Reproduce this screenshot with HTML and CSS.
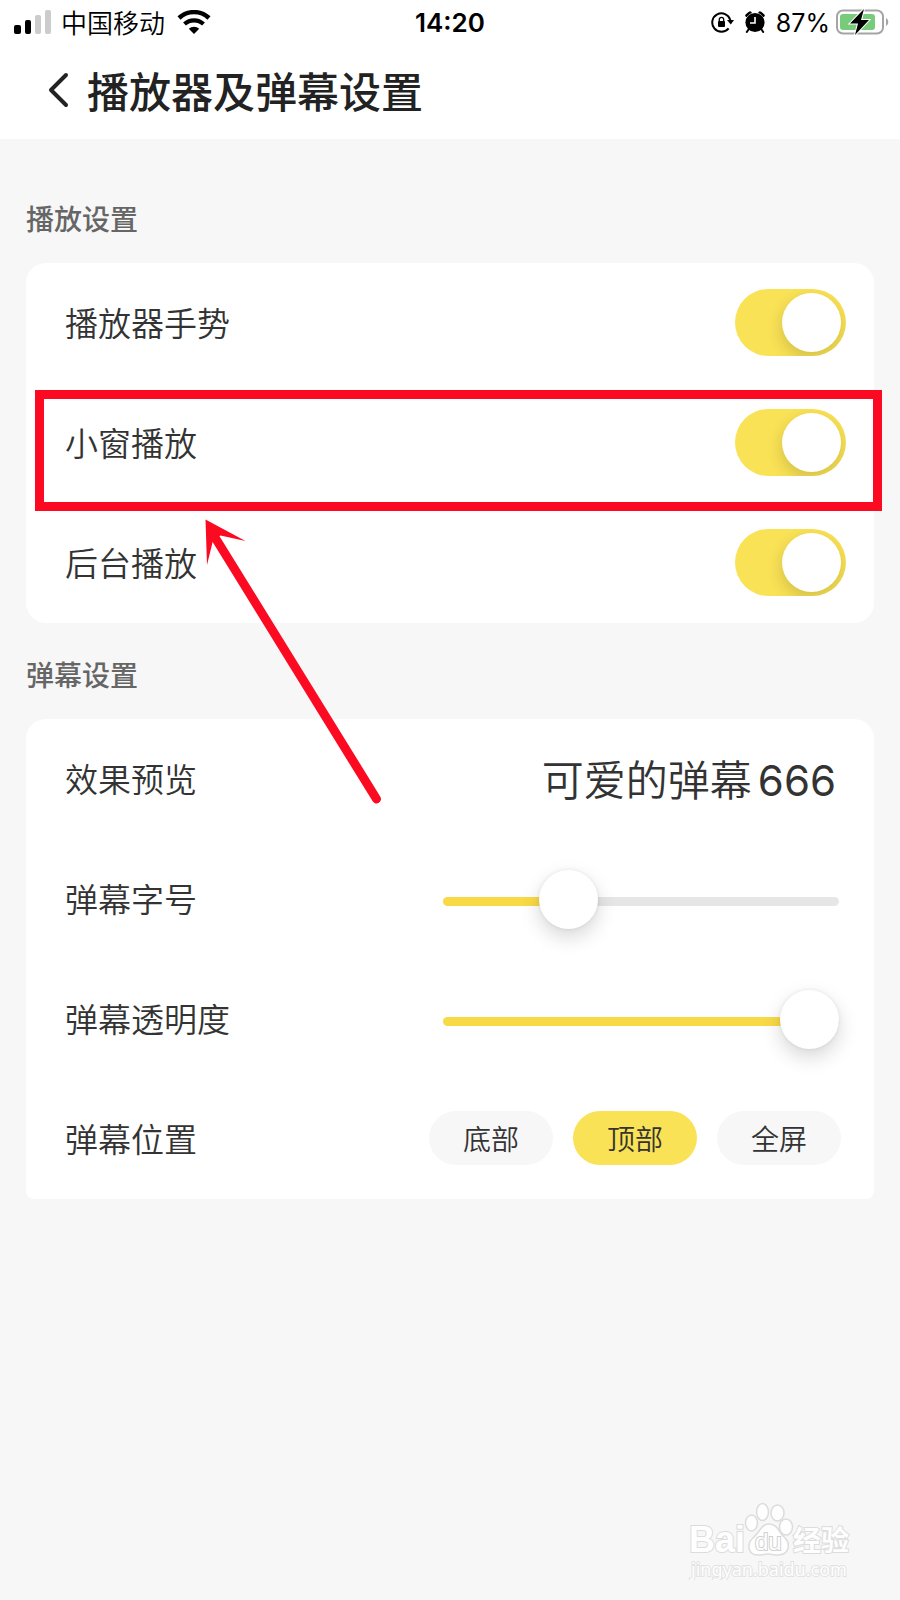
FILE: index.html
```html
<!DOCTYPE html>
<html lang="zh-CN">
<head>
  <meta charset="UTF-8" />
  <meta name="viewport" content="width=device-width, initial-scale=1.0"/>
  <title>播放器及弹幕设置</title>
  <link rel="stylesheet" href="styles.css">
</head>
<body>
  <div class="page">
    <!-- STATUS BAR -->
    <div class="status-bar">
      <div class="status-left">
        <svg class="signal" width="38" height="24" viewBox="0 0 38 24" aria-hidden="true">
          <rect x="0" y="15" width="7" height="9" rx="2" fill="#000"/>
          <rect x="11" y="10" width="6" height="14" rx="2" fill="#000"/>
          <rect x="21" y="5" width="6" height="19" rx="2" fill="#ccc"/>
          <rect x="31" y="0" width="6" height="24" rx="2" fill="#ccc"/>
        </svg>
        <span class="carrier">中国移动</span>
        <svg class="wifi" width="34" height="24" viewBox="0 0 34 24" aria-hidden="true">
          <path d="M2 8 A22 22 0 0 1 32 8" fill="none" stroke="#000" stroke-width="4.500"/>
          <path d="M7.500 14 A14 14 0 0 1 26.500 14" fill="none" stroke="#000" stroke-width="4.200"/>
          <path d="M17 24 L11.800 18.800 A7.500 7.500 0 0 1 22.200 18.800 Z" fill="#000"/>
        </svg>
      </div>
      <span class="time">14:20</span>
      <div class="status-right">
        <svg class="lock" width="23" height="22" viewBox="0 0 23 22" aria-hidden="true">
          <path d="M17.600 17.300 A9.200 9.200 0 1 1 19.300 9" fill="none" stroke="#000" stroke-width="2"/>
          <path d="M16 9 L23 9 L19.800 13.500 Z" fill="#000"/>
          <rect x="7" y="10" width="7" height="6" rx="1" fill="#000"/>
          <path d="M8.300 10.500 V8.500 a2.200 2.200 0 0 1 4.400 0 V10.500" fill="none" stroke="#000" stroke-width="1.300"/>
        </svg>
        <svg class="alarm" width="20" height="22" viewBox="0 0 20 22" aria-hidden="true">
          <path d="M2 4.500 L5 2 M18 4.500 L15 2" stroke="#000" stroke-width="3.500" stroke-linecap="round"/>
          <circle cx="10" cy="11.500" r="9.600" fill="#000" stroke="#fff" stroke-width="1" paint-order="stroke"/>
          <path d="M3.500 18.500 L1.800 21 M16.500 18.500 L18.200 21" stroke="#000" stroke-width="2" stroke-linecap="round"/>
          <path d="M10 6 V12 H5" fill="none" stroke="#fff" stroke-width="1.600"/>
        </svg>
        <span class="percent">87%</span>
        <svg class="battery" width="53" height="26" viewBox="0 0 53 26" aria-hidden="true">
          <rect x="1" y="1.500" width="46" height="23" rx="6" fill="#fff" stroke="#a5a5a8" stroke-width="2"/>
          <rect x="4" y="5" width="35" height="16" rx="3" fill="#78cb7b"/>
          <path d="M50 9 c3 1.500 3 6.500 0 8 z" fill="#a5a5a8"/>
          <path d="M28 0 L14 14.500 H22 L19 26 L33 11 H25 Z" fill="#000" stroke="#fff" stroke-width="2" paint-order="stroke"/>
        </svg>
      </div>
    </div>

    <!-- HEADER -->
    <header class="header">
      <button class="back" type="button" aria-label="返回">
        <svg width="22" height="36" viewBox="0 0 22 36" aria-hidden="true">
          <path d="M18 3 L3 18 L18 33" fill="none" stroke="#222" stroke-width="4" stroke-linecap="round" stroke-linejoin="round"/>
        </svg>
      </button>
      <h1 class="title">播放器及弹幕设置</h1>
    </header>

    <main class="content">
      <h2 class="section-title">播放设置</h2>
      <section class="card">
        <div class="row row-switch">
          <label for="gesture">播放器手势</label>
          <input class="switch" type="checkbox" id="gesture" checked />
        </div>
        <div class="row row-switch">
          <label for="window">小窗播放</label>
          <input class="switch" type="checkbox" id="window" checked />
          <span class="highlight"></span>
        </div>
        <div class="row row-switch">
          <label for="background">后台播放</label>
          <input class="switch" type="checkbox" id="background" checked />
          <svg class="arrow" width="190" height="290" viewBox="0 0 190 290" aria-hidden="true">
            <path d="M16 24 L176.500 284" stroke="#fb0a21" stroke-width="9" stroke-linecap="round"/>
            <path d="M5.500 4.500 L45.500 26 L20.500 20.500 L13 25.500 L7 50 Z" fill="#fb0a21"/>
          </svg>
        </div>
      </section>

      <h2 class="section-title">弹幕设置</h2>
      <section class="card card-danmu">
        <div class="row row-preview">
          <span>效果预览</span>
          <span class="preview">可爱的弹幕<span class="digits">666</span></span>
        </div>
        <div class="row row-slider">
          <label for="size">弹幕字号</label>
          <input class="slider" type="range" id="size" min="0" max="7" value="2" style="--fill: 29%" />
        </div>
        <div class="row row-slider">
          <label for="opacity">弹幕透明度</label>
          <input class="slider" type="range" id="opacity" min="0" max="100" value="100" style="--fill: 100%" />
        </div>
        <div class="row row-options">
          <span id="position-label">弹幕位置</span>
          <div class="options" role="group" aria-labelledby="position-label">
            <button class="option" type="button" aria-pressed="false">底部</button>
            <button class="option active" type="button" aria-pressed="true">顶部</button>
            <button class="option" type="button" aria-pressed="false">全屏</button>
          </div>
        </div>
      </section>
    </main>

    <!-- WATERMARK -->
    <svg class="watermark" width="190" height="90" viewBox="0 0 190 90">
      <text class="wm-logo" x="19" y="62">Bai</text>
      <g fill="#fefefe" stroke="#dcdcdc" stroke-width="1.500">
        <ellipse cx="81.500" cy="33" rx="6" ry="8"/>
        <ellipse cx="92.500" cy="22" rx="6" ry="8.500"/>
        <ellipse cx="107.500" cy="23" rx="6.500" ry="8"/>
        <ellipse cx="116" cy="37" rx="6.500" ry="8"/>
        <path d="M99 34 C108 34 109 43 115 48 C121 54 119 65 108 65 C102 65 103 64 98 64 C93 64 94 65 88 65 C77 65 77 53 83 48 C90 42 91 34 99 34 Z"/>
      </g>
      <text class="wm-du" x="85" y="60">du</text>
      <text class="wm-cn" x="123" y="61">经验</text>
      <text class="wm-url" x="21" y="86">jingyan.baidu.com</text>
    </svg>
  </div>

  <script>
    document.querySelectorAll(".slider").forEach((slider) => {
      slider.addEventListener("input", () => {
        slider.style.setProperty("--fill", (slider.value / slider.max) * 100 + "%");
      });
    });

    const options = document.querySelectorAll(".option");
    options.forEach((option) => {
      option.addEventListener("click", () => {
        options.forEach((o) => {
          o.classList.toggle("active", o === option);
          o.setAttribute("aria-pressed", o === option);
        });
      });
    });
  </script>
</body>
</html>
```
FILE: styles.css
```css
* {
  margin: 0;
  padding: 0;
  box-sizing: border-box;
}

body {
  background-color: #f7f7f7;
  color: #333;
  font-family: "Noto Sans CJK SC", sans-serif;
}

button, input {
  font-family: inherit;
}

.page {
  position: relative;
  min-height: 100vh;
}

/* Status bar */
.status-bar {
  display: grid;
  grid-template-columns: 1fr auto 1fr;
  align-items: center;
  height: 43px;
  padding: 0 11px;
  background-color: #fff;
  color: #000;
  line-height: 42px;
}

.status-left, .status-right {
  display: flex;
  align-items: center;
}

.status-left {
  padding-left: 3px;
}

.status-right {
  justify-content: flex-end;
}

.carrier {
  margin: 0 12px 0 9px;
  font-size: 26px;
  font-weight: 350;
}

.time {
  padding-top: 2px;
  font-family: Inter, sans-serif;
  font-size: 26px;
  font-weight: 600;
}

.alarm {
  margin: 0 11px;
}

.percent {
  padding-top: 2px;
  margin-right: 6px;
  font-family: Inter, sans-serif;
  font-size: 25px;
}

/* Header */
.header {
  display: flex;
  align-items: center;
  gap: 17px;
  height: 96px;
  padding: 0 48px 2px;
  background-color: #fff;
}

.back {
  display: flex;
  border: none;
  background: none;
  cursor: pointer;
}

.title {
  color: #222;
  font-size: 42px;
  font-weight: 500;
  line-height: 60px;
}

/* Sections */
.content {
  padding: 59px 26px;
}

.section-title {
  margin-bottom: 25px;
  color: #666;
  font-size: 28px;
  font-weight: 500;
  line-height: 40px;
}

.card {
  margin-bottom: 31px;
  border-radius: 20px;
  background-color: #fff;
}

.card-danmu {
  border-radius: 20px 20px 8px 8px;
}

.row {
  position: relative;
  display: flex;
  align-items: center;
  justify-content: space-between;
  height: 120px;
  padding-bottom: 2px;
  padding-left: 39px;
  font-size: 33px;
  font-weight: 350;
}

.row-switch {
  padding-right: 28px;
}

.row-preview {
  padding-right: 38px;
}

.row-slider {
  padding-right: 35px;
}

.row-options {
  padding-right: 33px;
}

/* Switch */
.switch {
  appearance: none;
  display: flex;
  align-items: center;
  width: 111px;
  height: 67px;
  padding: 0 5px;
  border-radius: 34px;
  background-color: #e5e5e5;
  overflow: hidden;
  cursor: pointer;
}

.switch::before {
  content: "";
  width: 59px;
  height: 59px;
  border-radius: 50%;
  background-color: #fff;
  box-shadow: 0 6px 16px rgba(0, 0, 0, 0.16);
}

.switch:checked {
  justify-content: flex-end;
  background-color: #f9e255;
}

/* Slider */
.slider {
  appearance: none;
  width: 396px;
  height: 60px;
  background: none;
  cursor: pointer;
}

.slider::-webkit-slider-runnable-track {
  height: 9px;
  margin-top: 6px;
  border-radius: 5px;
  background: linear-gradient(to right, #f8da47 var(--fill), #e6e6e6 var(--fill));
}

.slider::-webkit-slider-thumb {
  appearance: none;
  width: 59px;
  height: 59px;
  margin-top: -27px;
  border-radius: 50%;
  background-color: #fff;
  box-shadow: 0 8px 20px rgba(0, 0, 0, 0.16), 0 0 4px rgba(0, 0, 0, 0.08);
}

.preview {
  padding-bottom: 2px;
  font-size: 42px;
}

.digits {
  margin-left: 6px;
  font-family: Inter, sans-serif;
  font-weight: 400;
}

/* Position options */
.options {
  display: flex;
  gap: 20px;
}

.option {
  width: 124px;
  height: 54px;
  border: none;
  border-radius: 27px;
  background-color: #f7f7f7;
  color: #333;
  font-size: 28px;
  font-weight: 350;
  line-height: 54px;
  cursor: pointer;
}

.option.active {
  background-color: #f9e255;
}

/* Guide marks over the list */
.highlight {
  position: absolute;
  top: 7px;
  right: -8px;
  bottom: -8px;
  left: 9px;
  border: 9px solid #fb0a21;
  pointer-events: none;
}

.arrow {
  position: absolute;
  top: 12px;
  left: 174px;
  z-index: 1;
  pointer-events: none;
}

/* Watermark */
.watermark {
  position: absolute;
  right: 40px;
  bottom: 20px;
}

.wm-logo, .wm-cn, .wm-du, .wm-url {
  fill: #fefefe;
  stroke: #dcdcdc;
  stroke-width: 2px;
  paint-order: stroke;
}

.wm-logo {
  font-family: "Liberation Sans", sans-serif;
  font-size: 36px;
  font-weight: 700;
}

.wm-du {
  stroke: #d0d0d0;
  font-family: "Liberation Sans", sans-serif;
  font-size: 24px;
}

.wm-cn {
  font-size: 28px;
  font-weight: 700;
}

.wm-url {
  stroke: #e2e2e2;
  font-family: "Noto Sans", sans-serif;
  font-size: 18px;
}
```
